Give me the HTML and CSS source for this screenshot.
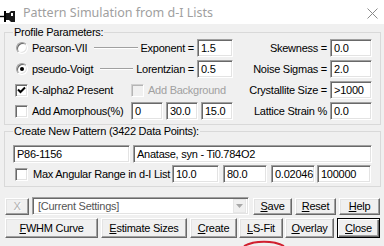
FILE: index.html
```html
<!DOCTYPE html>
<html>
<head>
<meta charset="utf-8">
<link rel="stylesheet" href="styles.css">
</head>
<body>
<div class="titlebar">
  <svg class="appicon" width="16" height="16" viewBox="0 0 16 16">
    <path d="M0 10.5H4" stroke="#000" stroke-width="1.4"/>
    <rect x="4" y="5" width="2" height="11" fill="#000"/>
    <path d="M6 7H9L11 5H15V16H11L9 14H6Z" fill="#1a1a1a"/>
    <rect x="11" y="7" width="2" height="3" fill="#fff"/>
  </svg>
  <span class="title">Pattern Simulation from d-I Lists</span>
  <svg class="close" width="11" height="11" viewBox="0 0 11 11">
    <path d="M0.5 0.5L10.5 10.5M10.5 0.5L0.5 10.5" stroke="#8a8a8a" stroke-width="1"/>
  </svg>
</div>
<div class="client">
  <div class="group g1">
    <div class="gtitle">Profile Parameters:</div>
    <div class="prow">
      <div class="lead"><span class="radio"></span><span class="txt">Pearson-VII</span><span class="rule"></span><span class="eq">Exponent =</span></div>
      <div class="edit">1.5</div>
      <div class="rlbl">Skewness =</div>
      <div class="edit">0.0</div>
    </div>
    <div class="prow">
      <div class="lead"><span class="radio on"></span><span class="txt">pseudo-Voigt</span><span class="rule"></span><span class="eq">Lorentzian =</span></div>
      <div class="edit">0.5</div>
      <div class="rlbl">Noise Sigmas =</div>
      <div class="edit">2.0</div>
    </div>
    <div class="prow">
      <div class="wide">
        <span class="opt"><span class="check on"><svg width="9" height="9" viewBox="0 0 9 9"><path d="M1 3.5L3.5 6L8 1.5" stroke="#000" stroke-width="2" fill="none"/></svg></span><span class="txt">K-alpha2 Present</span></span>
        <span class="check off"></span><span class="txt dim">Add Background</span>
      </div>
      <div class="rlbl">Crystallite Size =</div>
      <div class="edit">&gt;1000</div>
    </div>
    <div class="prow last">
      <div class="wide">
        <span class="opt"><span class="check"></span><span class="txt">Add Amorphous(%)</span></span>
        <div class="edit amo">0</div>
        <div class="edit amo">30.0</div>
        <div class="edit amo">15.0</div>
      </div>
      <div class="rlbl">Lattice Strain %</div>
      <div class="edit">0.0</div>
    </div>
  </div>
  <div class="group g2">
    <div class="gtitle">Create New Pattern (3422 Data Points):</div>
    <div class="crow first">
      <div class="edit pid">P86-1156</div>
      <div class="edit pname">Anatase, syn - Ti0.784O2</div>
    </div>
    <div class="crow">
      <span class="check cmax"></span><span class="txt maxlbl">Max Angular Range in d-I List</span>
      <div class="edit r1">10.0</div>
      <div class="edit r2">80.0</div>
      <div class="edit r3">0.02046</div>
      <div class="edit r4">100000</div>
    </div>
  </div>
  <div class="toolbar">
    <div class="btn xbtn">X</div>
    <div class="combo"><span class="ctext">[Current Settings]</span><span class="dd"><svg width="7" height="4" viewBox="0 0 7 4"><path d="M0 0H7L3.5 4Z" fill="#a8a8a8"/></svg></span></div>
    <div class="btn save"><u>S</u>ave</div>
    <div class="btn reset"><u>R</u>eset</div>
    <div class="btn help"><u>H</u>elp</div>
  </div>
  <div class="actions">
    <div class="btn fwhm"><u>F</u>WHM Curve</div>
    <div class="btn est"><u>E</u>stimate Sizes</div>
    <div class="btn create"><u>C</u>reate</div>
    <div class="btn lsfit"><u>L</u>S-Fit</div>
    <div class="btn overlay"><u>O</u>verlay</div>
    <div class="btn closebtn default"><u>C</u>lose</div>
  </div>
</div>
<svg class="mark" width="42" height="6" viewBox="0 0 42 6"><path d="M1 6A26 12 0 0 1 41 6" stroke="#d0202f" stroke-width="2" fill="none"/></svg>
</body>
</html>
```

FILE: styles.css
```css
* { box-sizing: border-box; }
html, body { margin: 0; padding: 0; }
body {
  width: 384px;
  height: 246px;
  overflow: hidden;
  position: relative;
  background: #f0f0f0;
  font-family: "Liberation Sans", Arial, sans-serif;
  font-size: 11px;
  letter-spacing: -0.25px;
  color: #000;
}
.titlebar {
  height: 24px;
  background: #fff;
  display: flex;
  align-items: center;
}
.appicon { margin: 3px 7px 0 0; flex: none; }
.title {
  flex: 1;
  font-family: "Noto Sans", sans-serif;
  font-size: 12.5px;
  letter-spacing: 0;
  color: #a0a0a0;
  padding-top: 1px;
}
.close { margin: 2px 6px 0 0; }

.client { padding: 2px 3px 0 4px; }

.group {
  margin-top: 6px;
  border: 1px solid #d9d9d9;
}
.gtitle {
  width: fit-content;
  margin: -7px 0 0 8px;
  padding: 0 1px;
  height: 13px;
  line-height: 13px;
  background: #f0f0f0;
  white-space: nowrap;
}
.g1 { padding-bottom: 4px; }
.g2 { padding-bottom: 3px; }

.prow {
  display: grid;
  grid-template-columns: 180px 36px 93px 42px;
  column-gap: 2px;
  height: 18px;
  margin: 0 0 3px 10px;
  align-items: center;
}
.prow.last { margin-bottom: 0; }
.lead { display: flex; align-items: center; height: 18px; }
.wide { grid-column: 1 / 3; display: flex; align-items: center; height: 18px; }
.opt { display: flex; align-items: center; width: 116px; flex: none; }
.txt { margin-left: 4px; white-space: nowrap; }
.dim { color: #a0a0a0; }
.rule { flex: 1; height: 0; border-top: 1px solid #a0a0a0; border-bottom: 1px solid #fff; margin: 0 3px 0 7px; }
.eq { padding-right: 1px; white-space: nowrap; }
.rlbl { text-align: right; padding-right: 1px; white-space: nowrap; }

.edit {
  height: 18px;
  background: #fff;
  border: 1px solid;
  border-color: #a0a0a0 #fff #fff #a0a0a0;
  box-shadow: inset 1px 1px 0 #696969, inset -1px -1px 0 #e3e3e3;
  padding: 0 0 0 3px;
  line-height: 16px;
  white-space: nowrap;
  overflow: hidden;
}
.amo { width: 32px; flex: none; margin-right: 3px; }

.radio {
  width: 12px;
  height: 12px;
  margin-left: 1px;
  border-radius: 50%;
  background: #fff;
  border: 1px solid;
  border-color: #a0a0a0 #fff #fff #a0a0a0;
  box-shadow: inset 1px 1px 0 #696969, inset -1px -1px 0 #e3e3e3;
  display: flex;
  align-items: center;
  justify-content: center;
  flex: none;
}
.radio.on::after {
  content: "";
  width: 4px;
  height: 4px;
  border-radius: 50%;
  background: #000;
}
.check {
  width: 13px;
  height: 13px;
  flex: none;
  background: #fff;
  border: 1px solid;
  border-color: #a0a0a0 #fff #fff #a0a0a0;
  box-shadow: inset 1px 1px 0 #696969, inset -1px -1px 0 #e3e3e3;
  display: flex;
  align-items: center;
  justify-content: center;
}
.check svg { margin: 1px 0 0 0; }
.check.off {
  background: #f0f0f0;
  border-color: #d0d0d0 #fff #fff #d0d0d0;
  box-shadow: inset 1px 1px 0 #b5b5b5;
}

.crow { display: flex; align-items: center; height: 18px; margin-left: 8px; }
.crow.first { margin-top: 7px; margin-bottom: 2px; }
.pid { width: 117px; margin-right: 3px; }
.pname { width: 239px; }
.cmax { margin-left: 2px; }
.maxlbl { margin-left: 5px; width: 139px; }
.r1 { width: 47px; margin-right: 4px; }
.r2 { width: 44px; margin-right: 4px; }
.r3 { width: 44px; margin-right: 2px; }
.r4 { width: 54px; }

.btn {
  background: #f0f0f0;
  border: 1px solid;
  border-color: #fff #696969 #696969 #fff;
  box-shadow: inset -1px -1px 0 #a0a0a0, inset 1px 1px 0 #e3e3e3;
  text-align: center;
  white-space: nowrap;
  flex: none;
}
.btn.default {
  border-color: #000;
  box-shadow: inset 1px 1px 0 #fff, inset -1px -1px 0 #696969, inset -2px -2px 0 #a0a0a0;
}

.toolbar { display: flex; align-items: center; height: 18px; margin-top: 10px; }
.xbtn { width: 24px; height: 17px; margin-left: 1px; line-height: 15px; color: #b0b0b0; text-shadow: 1px 1px 0 #fff; font-size: 11px; }
.combo {
  width: 217px;
  height: 18px;
  margin-left: 3px;
  background: #fff;
  border: 1px solid;
  border-color: #a0a0a0 #fff #fff #a0a0a0;
  box-shadow: inset 1px 1px 0 #696969, inset -1px -1px 0 #e3e3e3;
  display: flex;
  align-items: center;
}
.ctext { flex: 1; padding-left: 5px; color: #555; }
.dd {
  width: 13px;
  height: 14px;
  margin-right: 2px;
  background: #f0f0f0;
  border: 1px solid #e6e6e6;
  display: flex;
  align-items: center;
  justify-content: center;
}
.toolbar .btn { height: 17px; line-height: 15px; }
.save { width: 39px; margin-left: 4px; }
.reset { width: 41px; margin-left: 3px; }
.help { width: 41px; margin-left: 3px; }

.actions { display: flex; height: 20px; margin-top: 3px; }
.actions .btn { height: 20px; line-height: 18px; }
.fwhm { width: 93px; margin-left: 1px; }
.est { width: 86px; margin-left: 3px; }
.create { width: 47px; margin-left: 3px; }
.lsfit { width: 44px; margin-left: 2px; }
.overlay { width: 49px; margin-left: 2px; }
.closebtn { width: 43px; margin-left: 3px; }

.mark {
  position: absolute;
  left: 243px;
  top: 240px;
}
```
